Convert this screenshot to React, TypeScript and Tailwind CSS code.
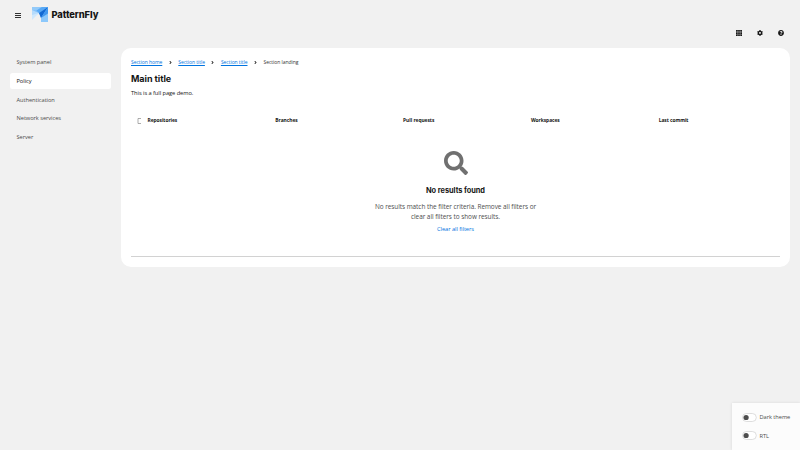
import React from 'react';
import { FaCog, FaQuestionCircle, FaSearch, FaAngleRight } from 'react-icons/fa';

const navItems = ['System panel', 'Policy', 'Authentication', 'Network services', 'Server'];
const columns = ['Repositories', 'Branches', 'Pull requests', 'Workspaces', 'Last commit'];

function Logo() {
  return (
    <svg className="ml-[11px] h-[15.5px] w-4" viewBox="0 0 32 31">
      <path d="M0 0H32V31H18V22L0 22Z" fill="#7fbffa" />
      <path d="M0 0H20L9 7L0 6Z" fill="#93caf9" />
      <path d="M0 6L14 12L0 22Z" fill="#b5dbfc" />
      <path d="M0 22L14 12L18 22L10 30H0Z" fill="#f1f1f1" />
      <path d="M0 16L14 12L0 26Z" fill="#cfe8fd" />
      <path d="M20 0H32L14 12L9 7Z" fill="#58a9f6" />
      <path d="M32 0L18 22L14 12Z" fill="#1269d3" />
      <path d="M32 0V18L18 22Z" fill="#3f97ef" />
      <path d="M32 13V31H18V22Z" fill="#8cc8fb" />
    </svg>
  );
}

function BarsIcon() {
  return (
    <svg className="mt-px h-[5px] w-1.5" viewBox="0 0 6 5" fill="#333" shapeRendering="crispEdges">
      <rect width="5.5" height="1" />
      <rect y="2" width="5.5" height="1" />
      <rect y="4" width="5.5" height="1" />
    </svg>
  );
}

function GridIcon() {
  return (
    <svg className="size-1.5" viewBox="0 0 12 12" fill="#151515">
      {[0, 4.25, 8.5].map((y) =>
        [0, 4.25, 8.5].map((x) => <rect key={`${x}-${y}`} x={x} y={y} width="3.5" height="3.5" rx=".3" />)
      )}
    </svg>
  );
}

function CheckboxIcon() {
  return (
    <svg className="mr-[5.5px] h-1.5 w-[5px] shrink-0" viewBox="0 0 5 6" fill="none">
      <path d="M4 .5H1V5.5H4" stroke="#8a8a8a" strokeWidth=".7" />
    </svg>
  );
}

function Toggle({ label }: { label: string }) {
  return (
    <div className="flex h-[18.6px] items-center gap-[2.5px]">
      <svg className="h-[9px] w-[15px] shrink-0" viewBox="0 0 15 9">
        <rect x=".5" y=".5" width="13.8" height="8" rx="4" fill="#fff" stroke="#d0d0d0" strokeWidth=".7" />
        <circle cx="4.1" cy="4.5" r="2.6" fill="#4d4d4d" />
      </svg>
      <span className="whitespace-nowrap">{label}</span>
    </div>
  );
}

export default function App() {
  return (
    <div className="relative flex h-[450px] w-[800px] flex-col overflow-hidden bg-[#f1f1f1] font-['Open_Sans','Liberation_Sans',sans-serif] text-[5.7px] tracking-[-0.05px] text-[#151515] [font-variant-ligatures:none]">
      <header className="h-12 shrink-0">
        <div className="flex h-[29px] items-center pl-[15px]">
          <BarsIcon />
          <Logo />
          <span className="ml-[3.5px] font-['Inter','Liberation_Sans',sans-serif] text-[9.3px] font-extrabold">PatternFly</span>
        </div>
        <div className="flex h-2 items-center justify-end gap-[15px] pr-[16.5px]">
          <GridIcon />
          <FaCog className="size-1.5" />
          <FaQuestionCircle className="size-1.5" />
        </div>
      </header>
      <div className="flex items-start">
        <nav className="flex w-[121px] flex-col gap-[3px] pr-2.5 pl-2.5 pt-1.5">
          {navItems.map((item) => (
            <a
              key={item}
              className={
                item === 'Policy'
                  ? 'flex h-[15.75px] items-center rounded-[2.5px] bg-white pt-[0.8px] pl-[6.5px]'
                  : 'flex h-[15.75px] items-center pt-[0.8px] pl-[6.5px] text-[#4d4d4d]'
              }
            >
              {item}
            </a>
          ))}
        </nav>
        <main className="h-[219px] w-[669px] rounded-[10px] bg-white px-2.5 pt-2.5">
          <div className="flex h-[9px] items-center text-[5px]">
            {['Section home', 'Section title', 'Section title'].map((label, i) => (
              <React.Fragment key={i}>
                <span className="whitespace-nowrap text-[#0074e0] underline">{label}</span>
                <FaAngleRight className="mx-[5.5px] size-[5px]" />
              </React.Fragment>
            ))}
            <span className="whitespace-nowrap text-[#333]">Section landing</span>
          </div>
          <h1 className="mt-[5px] h-3.5 font-['Inter','Liberation_Sans',sans-serif] text-[9px] leading-[14px] font-bold tracking-[-0.05px]">Main title</h1>
          <p className="mt-[2.5px] leading-[9px]">This is a full page demo.</p>
          <div className="mt-[19px] flex h-[9px] items-center pl-[6px] text-[4.9px] font-bold">
            <CheckboxIcon />
            {columns.map((column) => (
              <span key={column} className="w-[127.8px] shrink-0">{column}</span>
            ))}
          </div>
          <div className="flex flex-col items-center pt-[25.5px]">
            <FaSearch className="size-6 text-[#707070]" />
            <h2 className="mt-[9px] font-['Inter','Liberation_Sans',sans-serif] text-[7.4px] leading-[13px] font-bold">No results found</h2>
            <p className="mt-[5px] text-center text-[6.45px] leading-[10px] text-[#4d4d4d]">
              No results match the filter criteria. Remove all filters or
              <br />
              clear all filters to show results.
            </p>
            <a className="mt-[3px] leading-[9px] text-[#0074e0]">Clear all filters</a>
          </div>
          <div className="mt-[22px] h-px bg-[#d2d2d2]" />
        </main>
      </div>
      <aside className="absolute right-0 bottom-0 h-[47px] w-[68px] bg-[#fcfcfc] pt-[5px] pl-2.5 text-[#4d4d4d] shadow-[0_0_3px_rgba(0,0,0,0.1)]">
        <Toggle label="Dark theme" />
        <Toggle label="RTL" />
      </aside>
    </div>
  );
}
